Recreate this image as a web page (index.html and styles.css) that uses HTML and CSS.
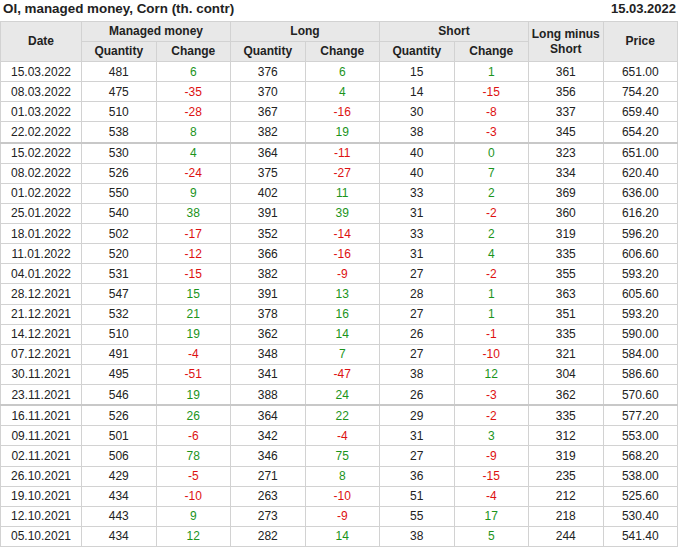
FILE: index.html
```html
<!DOCTYPE html>
<html>
<head>
<meta charset="utf-8">
<link rel="stylesheet" href="styles.css">
</head>
<body>
<div class="titlebar">
  <span class="title">OI, managed money, Corn (th. contr)</span>
  <span class="date">15.03.2022</span>
</div>
<table class="cot">
  <colgroup>
    <col class="c-date"><col class="c-n"><col class="c-n"><col class="c-n"><col class="c-n"><col class="c-n"><col class="c-n"><col class="c-n"><col class="c-n">
  </colgroup>
  <thead>
    <tr class="h1">
      <th rowspan="2">Date</th>
      <th colspan="2">Managed money</th>
      <th colspan="2">Long</th>
      <th colspan="2">Short</th>
      <th rowspan="2">Long minus<br>Short</th>
      <th rowspan="2">Price</th>
    </tr>
    <tr class="h2">
      <th>Quantity</th><th>Change</th>
      <th>Quantity</th><th>Change</th>
      <th>Quantity</th><th>Change</th>
    </tr>
  </thead>
  <tbody>
    <tr><td>15.03.2022</td><td>481</td><td class="up">6</td><td>376</td><td class="up">6</td><td>15</td><td class="up">1</td><td>361</td><td>651.00</td></tr>
    <tr><td>08.03.2022</td><td>475</td><td class="dn">-35</td><td>370</td><td class="up">4</td><td>14</td><td class="dn">-15</td><td>356</td><td>754.20</td></tr>
    <tr><td>01.03.2022</td><td>510</td><td class="dn">-28</td><td>367</td><td class="dn">-16</td><td>30</td><td class="dn">-8</td><td>337</td><td>659.40</td></tr>
    <tr class="sep"><td>22.02.2022</td><td>538</td><td class="up">8</td><td>382</td><td class="up">19</td><td>38</td><td class="dn">-3</td><td>345</td><td>654.20</td></tr>
    <tr><td>15.02.2022</td><td>530</td><td class="up">4</td><td>364</td><td class="dn">-11</td><td>40</td><td class="up">0</td><td>323</td><td>651.00</td></tr>
    <tr><td>08.02.2022</td><td>526</td><td class="dn">-24</td><td>375</td><td class="dn">-27</td><td>40</td><td class="up">7</td><td>334</td><td>620.40</td></tr>
    <tr><td>01.02.2022</td><td>550</td><td class="up">9</td><td>402</td><td class="up">11</td><td>33</td><td class="up">2</td><td>369</td><td>636.00</td></tr>
    <tr><td>25.01.2022</td><td>540</td><td class="up">38</td><td>391</td><td class="up">39</td><td>31</td><td class="dn">-2</td><td>360</td><td>616.20</td></tr>
    <tr><td>18.01.2022</td><td>502</td><td class="dn">-17</td><td>352</td><td class="dn">-14</td><td>33</td><td class="up">2</td><td>319</td><td>596.20</td></tr>
    <tr><td>11.01.2022</td><td>520</td><td class="dn">-12</td><td>366</td><td class="dn">-16</td><td>31</td><td class="up">4</td><td>335</td><td>606.60</td></tr>
    <tr><td>04.01.2022</td><td>531</td><td class="dn">-15</td><td>382</td><td class="dn">-9</td><td>27</td><td class="dn">-2</td><td>355</td><td>593.20</td></tr>
    <tr><td>28.12.2021</td><td>547</td><td class="up">15</td><td>391</td><td class="up">13</td><td>28</td><td class="up">1</td><td>363</td><td>605.60</td></tr>
    <tr><td>21.12.2021</td><td>532</td><td class="up">21</td><td>378</td><td class="up">16</td><td>27</td><td class="up">1</td><td>351</td><td>593.20</td></tr>
    <tr><td>14.12.2021</td><td>510</td><td class="up">19</td><td>362</td><td class="up">14</td><td>26</td><td class="dn">-1</td><td>335</td><td>590.00</td></tr>
    <tr><td>07.12.2021</td><td>491</td><td class="dn">-4</td><td>348</td><td class="up">7</td><td>27</td><td class="dn">-10</td><td>321</td><td>584.00</td></tr>
    <tr><td>30.11.2021</td><td>495</td><td class="dn">-51</td><td>341</td><td class="dn">-47</td><td>38</td><td class="up">12</td><td>304</td><td>586.60</td></tr>
    <tr class="sep"><td>23.11.2021</td><td>546</td><td class="up">19</td><td>388</td><td class="up">24</td><td>26</td><td class="dn">-3</td><td>362</td><td>570.60</td></tr>
    <tr><td>16.11.2021</td><td>526</td><td class="up">26</td><td>364</td><td class="up">22</td><td>29</td><td class="dn">-2</td><td>335</td><td>577.20</td></tr>
    <tr><td>09.11.2021</td><td>501</td><td class="dn">-6</td><td>342</td><td class="dn">-4</td><td>31</td><td class="up">3</td><td>312</td><td>553.00</td></tr>
    <tr><td>02.11.2021</td><td>506</td><td class="up">78</td><td>346</td><td class="up">75</td><td>27</td><td class="dn">-9</td><td>319</td><td>568.20</td></tr>
    <tr><td>26.10.2021</td><td>429</td><td class="dn">-5</td><td>271</td><td class="up">8</td><td>36</td><td class="dn">-15</td><td>235</td><td>538.00</td></tr>
    <tr><td>19.10.2021</td><td>434</td><td class="dn">-10</td><td>263</td><td class="dn">-10</td><td>51</td><td class="dn">-4</td><td>212</td><td>525.60</td></tr>
    <tr><td>12.10.2021</td><td>443</td><td class="up">9</td><td>273</td><td class="dn">-9</td><td>55</td><td class="up">17</td><td>218</td><td>530.40</td></tr>
    <tr><td>05.10.2021</td><td>434</td><td class="up">12</td><td>282</td><td class="up">14</td><td>38</td><td class="up">5</td><td>244</td><td>541.40</td></tr>
  </tbody>
</table>
</body>
</html>
```

FILE: styles.css
```css
html, body {
  margin: 0;
  padding: 0;
  background: #ffffff;
}

body {
  font-family: "Liberation Sans", Arial, sans-serif;
  color: #222222;
  width: 680px;
}

.titlebar {
  display: flex;
  justify-content: space-between;
  align-items: flex-start;
  height: 21px;
  padding: 1px 4px 0 3px;
  box-sizing: border-box;
  font-weight: bold;
  font-size: 13px;
  line-height: 16px;
}

.title {
  font-size: 13.4px;
}

.cot {
  border-collapse: collapse;
  table-layout: fixed;
  width: 678px;
  font-size: 12px;
}

.c-date { width: 81px; }
.c-n { width: 74.5px; }

.cot th,
.cot td {
  border: 1px solid #d2d2d2;
  padding: 0;
  text-align: center;
  vertical-align: middle;
  white-space: nowrap;
  overflow: hidden;
}

.cot th {
  background: #e8e8e8;
  font-weight: bold;
  height: 19px;
  line-height: 15px;
}

.cot td {
  height: 19.14px;
  line-height: 14px;
}

.cot tr.sep td {
  border-bottom: 2px solid #c8c8c8;
}

.cot td.up { color: #1b941b; }
.cot td.dn { color: #dd1111; }
```
